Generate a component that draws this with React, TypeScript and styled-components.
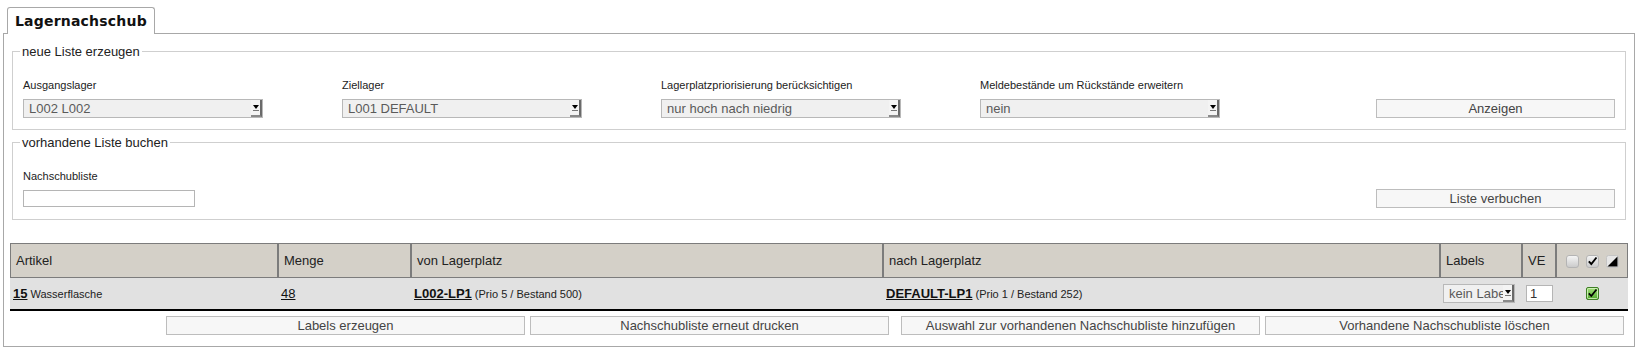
import styled, { createGlobalStyle } from 'styled-components';

const GlobalStyle = createGlobalStyle`
  body {
    margin: 0;
    background: #ffffff;
    font-family: "Liberation Sans", Arial, sans-serif;
    color: #222222;
  }
`;

const Page = styled.div`
  padding: 7px 0 0 3px;
  width: 1632px;
`;

const TabBar = styled.div`
  display: flex;
  padding-left: 4px;
`;

const Tab = styled.div`
  position: relative;
  z-index: 1;
  margin-bottom: -1px;
  height: 26px;
  padding: 0 7px;
  border: 1px solid #a8a8a8;
  border-bottom: none;
  border-radius: 3px 3px 0 0;
  background: #ffffff;
  font-family: "DejaVu Sans", Verdana, sans-serif;
  font-weight: bold;
  font-size: 14px;
  letter-spacing: 0.2px;
  line-height: 27px;
  color: #111111;
`;

const Panel = styled.div`
  box-sizing: border-box;
  width: 1632px;
  border: 1px solid #a8a8a8;
  padding: 10px 6px 11px;
`;

const Fieldset = styled.fieldset`
  margin: 0 2px;
  padding: 19px 10px 11px;
  border: 1px solid #cfcfcf;
  min-inline-size: 0;
  & + & {
    margin-top: 5px;
  }
`;

const Legend = styled.legend`
  margin-left: -3px;
  padding: 0 2px;
  font-size: 13px;
  line-height: 15px;
  color: #222222;
`;

const FieldRow = styled.div`
  display: flex;
  align-items: flex-end;
`;

const Field = styled.div<{ $w: number }>`
  width: ${(p) => p.$w}px;
  flex-shrink: 0;
`;

const Label = styled.div`
  font-size: 11px;
  line-height: 14px;
  margin-bottom: 7px;
  color: #222222;
`;

const SelectBox = styled.div<{ $w: number }>`
  box-sizing: border-box;
  width: ${(p) => p.$w}px;
  height: 19px;
  display: flex;
  align-items: center;
  border: 1px solid #b8b8b8;
  background: #f0f0f0;
  padding-left: 5px;
  font-size: 13px;
  color: #5a5a5a;
  overflow: hidden;
`;

const SelectText = styled.span`
  flex: 1;
  white-space: nowrap;
  overflow: hidden;
`;

const Arrow = styled.span`
  box-sizing: border-box;
  width: 11px;
  height: 17px;
  flex-shrink: 0;
  display: flex;
  align-items: center;
  justify-content: center;
  border-right: 2px solid #6a6a6a;
  border-bottom: 2px solid #8a8a8a;
  background: #f4f4f4;
`;

const TextInput = styled.div<{ $w: number }>`
  box-sizing: border-box;
  width: ${(p) => p.$w}px;
  height: 17px;
  margin-bottom: 1px;
  border: 1px solid #b5b5b5;
  background: #ffffff;
  padding-left: 3px;
  font-size: 13px;
  line-height: 15px;
  color: #333333;
`;

const Button = styled.div<{ $push?: boolean }>`
  box-sizing: border-box;
  width: ${(p) => (p.$push ? '239px' : '359px')};
  height: 19px;
  margin-left: ${(p) => (p.$push ? 'auto' : '0')};
  border: 1px solid #bdbdbd;
  background: #f7f7f7;
  text-align: center;
  font-size: 13px;
  line-height: 17px;
  color: #444444;
`;

const Table = styled.table`
  margin-top: 23px;
  width: 100%;
  table-layout: fixed;
  border-collapse: separate;
  border-spacing: 0;
`;

const Th = styled.th`
  height: 33px;
  padding: 0 5px;
  border: 1px solid #7c7c7c;
  background: #d4d0c8;
  text-align: left;
  font-weight: normal;
  font-size: 13px;
  color: #222222;
  white-space: nowrap;
`;

const IconTh = styled(Th)`
  text-align: center;
  padding: 0;
`;

const Td = styled.td<{ $pad?: number; $center?: boolean }>`
  height: 31px;
  padding: 0 ${(p) => p.$pad ?? 3}px;
  background: #e1e1e1;
  border-bottom: 2px solid #000000;
  font-size: 11px;
  color: #222222;
  text-align: ${(p) => (p.$center ? 'center' : 'left')};
  white-space: nowrap;
`;

const StrongLink = styled.span`
  font-weight: bold;
  font-size: 13px;
  text-decoration: underline;
  color: #111111;
`;

const PlainLink = styled.span`
  font-size: 13px;
  text-decoration: underline;
  color: #111111;
`;

const IconGroup = styled.div`
  display: inline-flex;
  align-items: center;
  gap: 7px;
  vertical-align: middle;
`;

const ButtonBar = styled.div`
  display: flex;
  justify-content: flex-end;
  gap: 12px;
  margin-top: 5px;
  padding-right: 4px;
`;

const ButtonPair = styled.div`
  display: flex;
  gap: 5px;
`;

const Select = ({ w, value }: { w: number; value: string }) => (
  <SelectBox $w={w}>
    <SelectText>{value}</SelectText>
    <Arrow>
      <svg width="8" height="9" viewBox="0 0 8 9">
        <polygon points="1,2 7,2 4,6" fill="#000" />
        <rect x="1" y="7" width="6" height="1" fill="#777" />
      </svg>
    </Arrow>
  </SelectBox>
);

const BoxIcon = ({ checked }: { checked?: boolean }) => (
  <svg width="13" height="13" viewBox="0 0 13 13">
    <defs>
      <linearGradient id="boxg" x1="0" y1="0" x2="0" y2="1">
        <stop offset="0" stopColor="#f6f6f6" />
        <stop offset="1" stopColor="#c9c9c9" />
      </linearGradient>
    </defs>
    <rect x="0.5" y="0.5" width="12" height="12" rx="2.5" fill="url(#boxg)" stroke="#b4b4b4" />
    {checked && <path d="M2.8 6.4 L5.3 9 L10.5 2.5" fill="none" stroke="#000" strokeWidth="1.9" />}
  </svg>
);

const InvertIcon = () => (
  <svg width="13" height="13" viewBox="0 0 13 13">
    <rect x="0.5" y="0.5" width="12" height="12" rx="2" fill="#e6e6e6" stroke="#c4c4c4" />
    <polygon points="1.5,11.5 11.5,11.5 11.5,1.5" fill="#000" />
  </svg>
);

const GreenCheck = () => (
  <svg width="13" height="13" viewBox="0 0 13 13" style={{ verticalAlign: 'middle' }}>
    <defs>
      <linearGradient id="greeng" x1="0" y1="0" x2="0" y2="1">
        <stop offset="0" stopColor="#a6e27d" />
        <stop offset="1" stopColor="#4ea82b" />
      </linearGradient>
    </defs>
    <rect x="0.5" y="0.5" width="12" height="12" rx="1.5" fill="url(#greeng)" stroke="#3f7f25" />
    <rect x="1.5" y="1.5" width="10" height="10" rx="1" fill="none" stroke="#d9f5c6" strokeWidth="0.8" />
    <path d="M2.8 6.4 L5.3 9 L10.5 2.5" fill="none" stroke="#000" strokeWidth="1.8" />
  </svg>
);

export default function App() {
  return (
    <Page>
      <GlobalStyle />
      <TabBar>
        <Tab>Lagernachschub</Tab>
      </TabBar>
      <Panel>
        <Fieldset>
          <Legend>neue Liste erzeugen</Legend>
          <FieldRow>
            <Field $w={319}>
              <Label>Ausgangslager</Label>
              <Select w={240} value="L002 L002" />
            </Field>
            <Field $w={319}>
              <Label>Ziellager</Label>
              <Select w={240} value="L001 DEFAULT" />
            </Field>
            <Field $w={319}>
              <Label>Lagerplatzpriorisierung berücksichtigen</Label>
              <Select w={240} value="nur hoch nach niedrig" />
            </Field>
            <Field $w={319}>
              <Label>Meldebestände um Rückstände erweitern</Label>
              <Select w={240} value="nein" />
            </Field>
            <Button $push>Anzeigen</Button>
          </FieldRow>
        </Fieldset>
        <Fieldset>
          <Legend>vorhandene Liste buchen</Legend>
          <FieldRow>
            <Field $w={319}>
              <Label>Nachschubliste</Label>
              <TextInput $w={172} />
            </Field>
            <Button $push>Liste verbuchen</Button>
          </FieldRow>
        </Fieldset>

        <Table>
          <colgroup>
            <col style={{ width: 268 }} />
            <col style={{ width: 133 }} />
            <col style={{ width: 472 }} />
            <col style={{ width: 557 }} />
            <col style={{ width: 82 }} />
            <col style={{ width: 34 }} />
            <col />
          </colgroup>
          <thead>
            <tr>
              <Th>Artikel</Th>
              <Th>Menge</Th>
              <Th>von Lagerplatz</Th>
              <Th>nach Lagerplatz</Th>
              <Th>Labels</Th>
              <Th>VE</Th>
              <IconTh>
                <IconGroup>
                  <BoxIcon />
                  <BoxIcon checked />
                  <InvertIcon />
                </IconGroup>
              </IconTh>
            </tr>
          </thead>
          <tbody>
            <tr>
              <Td>
                <StrongLink>15</StrongLink> Wasserflasche
              </Td>
              <Td>
                <PlainLink>48</PlainLink>
              </Td>
              <Td>
                <StrongLink>L002-LP1</StrongLink> (Prio 5 / Bestand 500)
              </Td>
              <Td>
                <StrongLink>DEFAULT-LP1</StrongLink> (Prio 1 / Bestand 252)
              </Td>
              <Td>
                <Select w={72} value="kein Labels" />
              </Td>
              <Td $pad={4}>
                <TextInput $w={27}>1</TextInput>
              </Td>
              <Td $center>
                <GreenCheck />
              </Td>
            </tr>
          </tbody>
        </Table>

        <ButtonBar>
          <ButtonPair>
            <Button>Labels erzeugen</Button>
            <Button>Nachschubliste erneut drucken</Button>
          </ButtonPair>
          <ButtonPair>
            <Button>Auswahl zur vorhandenen Nachschubliste hinzufügen</Button>
            <Button>Vorhandene Nachschubliste löschen</Button>
          </ButtonPair>
        </ButtonBar>
      </Panel>
    </Page>
  );
}
